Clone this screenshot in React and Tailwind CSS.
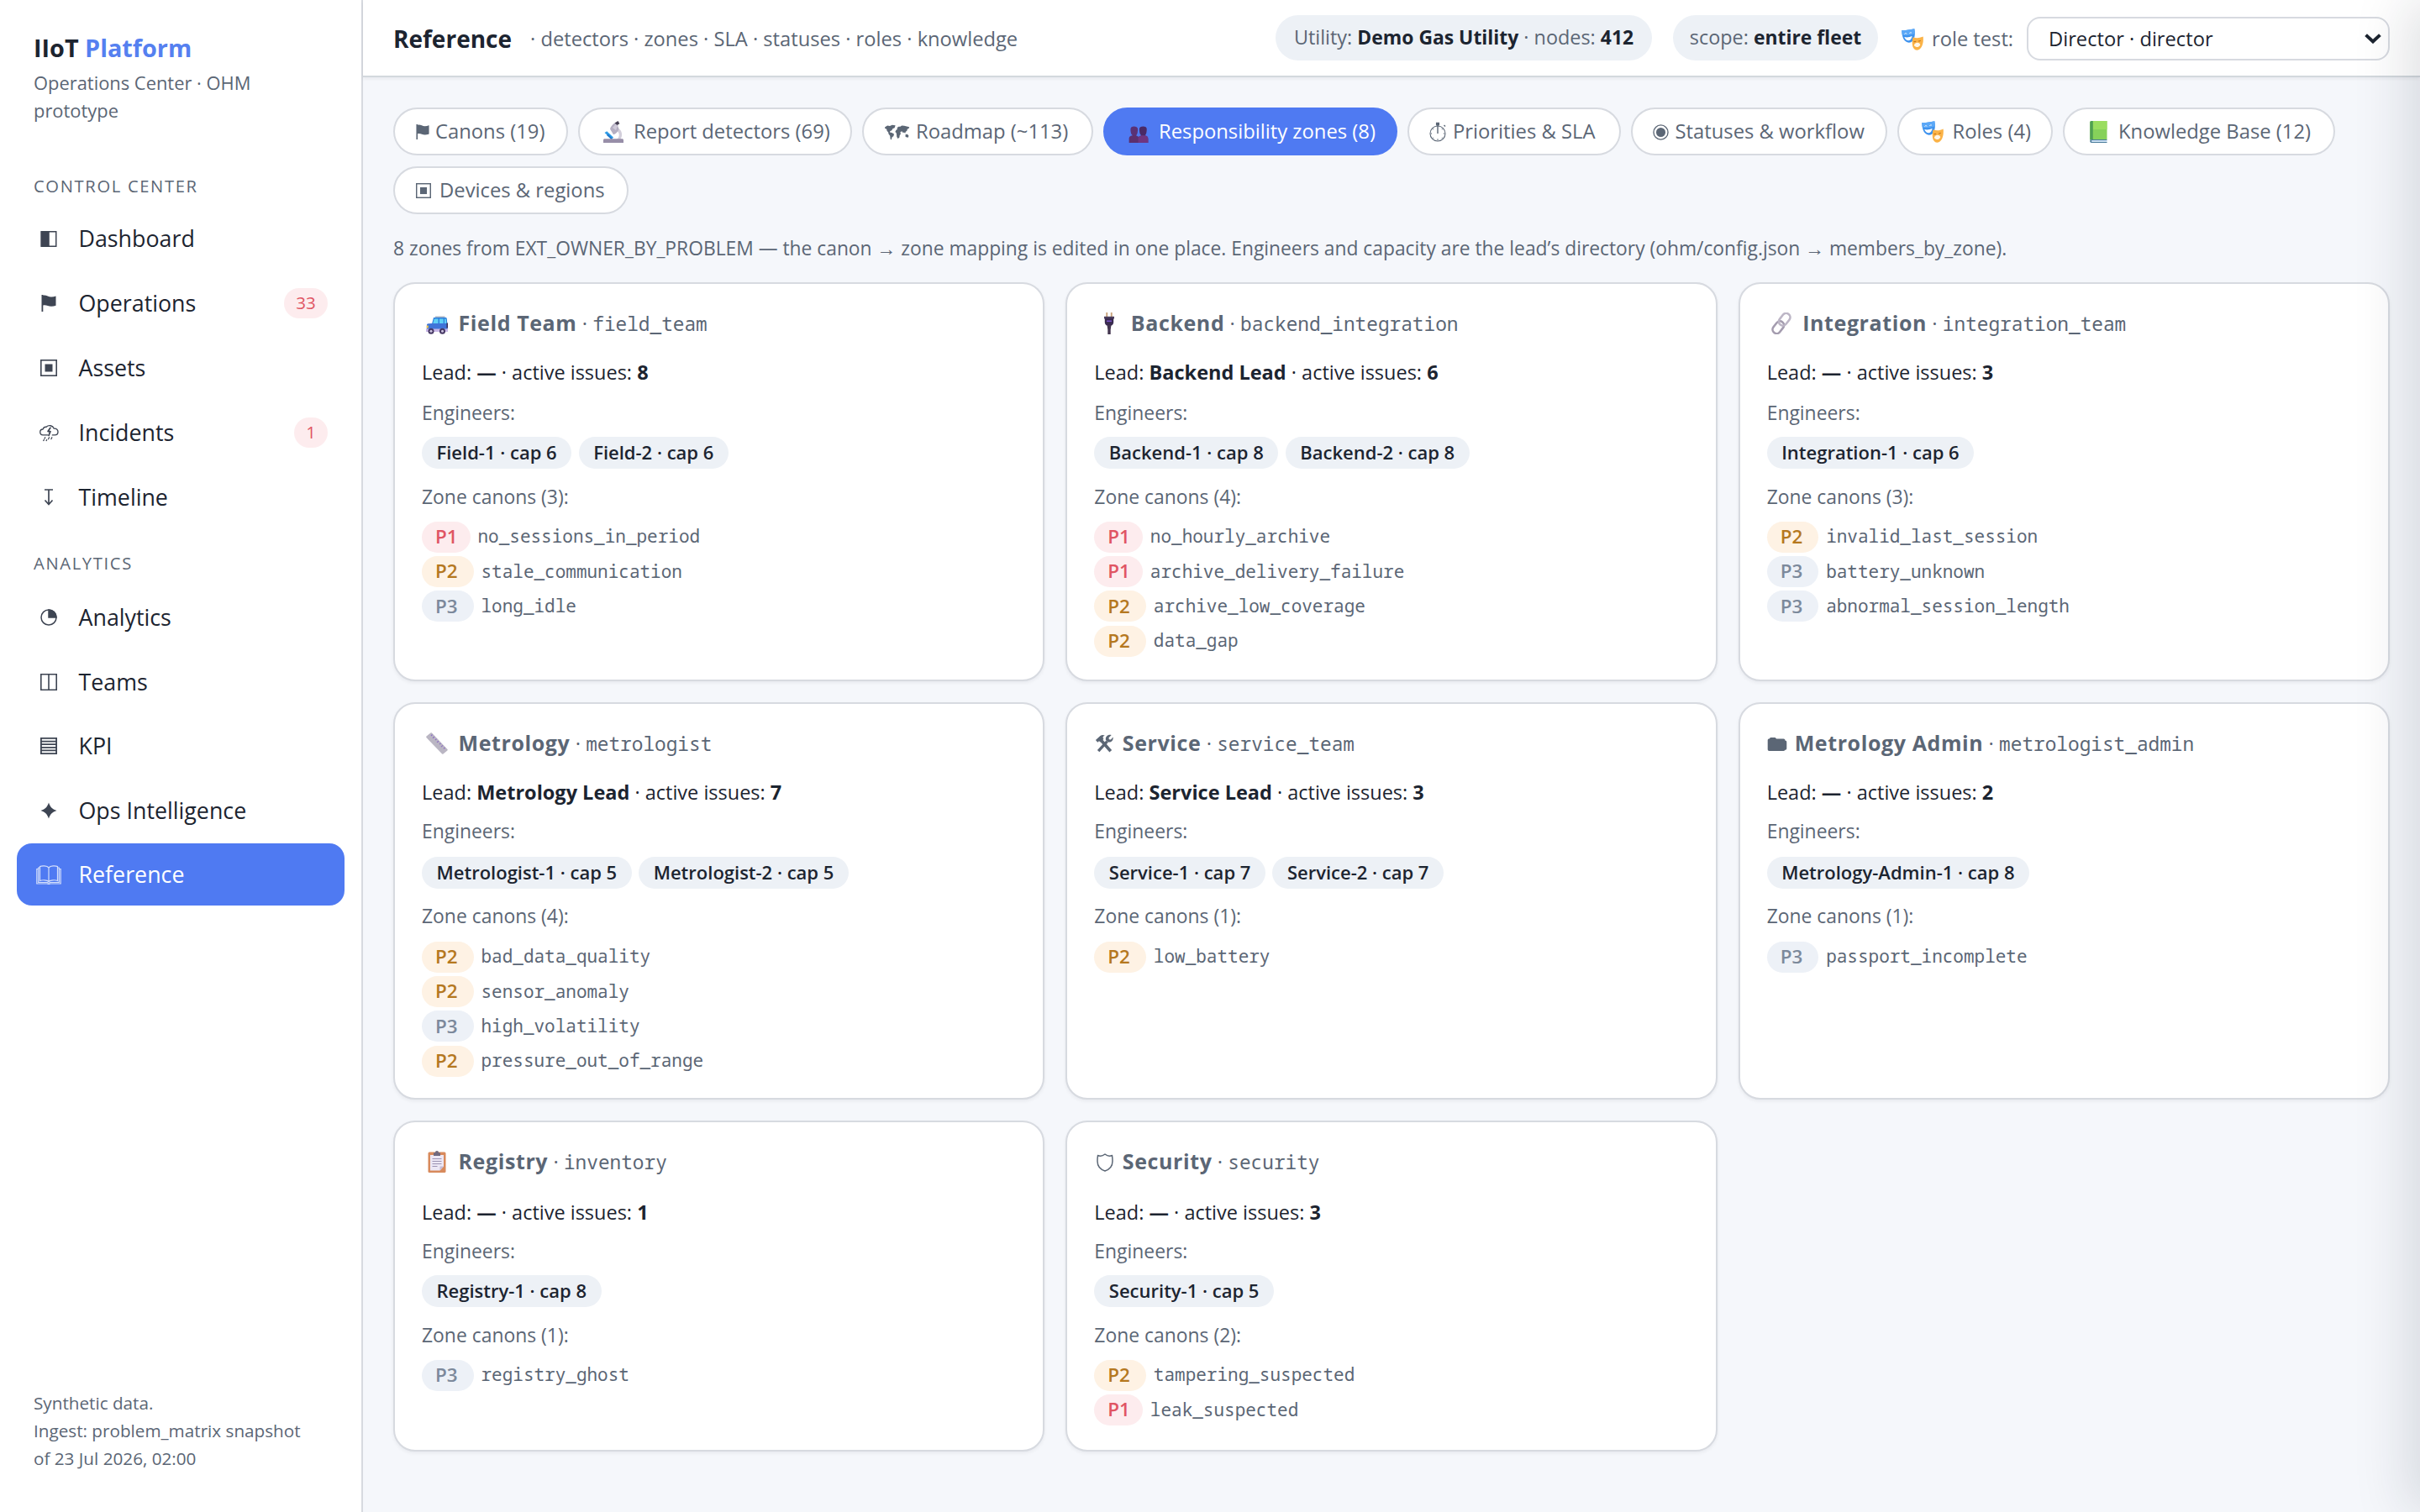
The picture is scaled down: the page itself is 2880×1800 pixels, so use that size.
import React from "react";

/* ---------- monochrome symbols (drawn in currentColor) ---------- */

const HalfSquare = ({ className }) => (
  <svg viewBox="0 0 20 20" className={className} fill="none" stroke="currentColor" strokeWidth="1.6">
    <rect x="0.8" y="0.8" width="18.4" height="18.4" />
    <path d="M1 1h9v18H1z" fill="currentColor" />
  </svg>
);
const Flag = ({ className }) => (
  <svg viewBox="0 0 18 20" className={className} fill="currentColor">
    <path d="M0.5 0h1.8v20H0.5zM2.3 0.6C6 -0.2 8.4 2.4 12 2.4c2 0 3.8-.5 5.5-1v11.4c-1.700.6-3.500 1-5.500 1-3.600 0-6-2.200-9.700-1.400z" />
  </svg>
);
const TargetSquare = ({ className }) => (
  <svg viewBox="0 0 20 20" className={className} fill="none" stroke="currentColor" strokeWidth="1.6">
    <rect x="0.8" y="0.8" width="18.4" height="18.4" />
    <path d="M5.500 5.500h9v9h-9z" fill="currentColor" stroke="none" />
  </svg>
);
const Storm = ({ className }) => (
  <svg viewBox="0 0 24 22" className={className} fill="none" stroke="currentColor" strokeWidth="1.400" strokeLinejoin="round" strokeLinecap="round">
    <path d="M10 13.500H4.500a3.600 3.600 0 0 1-.3-7.200A4 4 0 0 1 8.500 3.400 5.800 5.800 0 0 1 18 5.400c3.400-.3 5 1.800 5 4 0 2.400-1.600 4.100-4 4.100h-3" />
    <path d="M13.500 4.500 10.500 9h3l-2 5" strokeWidth="1.800" />
    <path d="M7 16.500l-.8 1.500M5.500 19.500l-.6 1M12 16.500l-1 2M9 19.500l-.6 1M15.500 16.500l-1 2" strokeWidth="1.300" />
  </svg>
);
const DownFromBar = ({ className }) => (
  <svg viewBox="0 0 12 20" className={className} fill="none" stroke="currentColor" strokeWidth="1.700">
    <path d="M1 1h10M6 1v17M1.500 13.500 6 18.500l4.500-5" />
  </svg>
);
const QuarterPie = ({ className }) => (
  <svg viewBox="0 0 20 20" className={className} fill="none" stroke="currentColor" strokeWidth="1.500">
    <circle cx="10" cy="10" r="9" />
    <path d="M10 1a9 9 0 0 1 9 9h-9z" fill="currentColor" />
  </svg>
);
const SplitSquare = ({ className }) => (
  <svg viewBox="0 0 20 20" className={className} fill="none" stroke="currentColor" strokeWidth="1.600">
    <path d="M.8.8h18.400v18.400H.8zM10 .8v18.400" />
  </svg>
);
const LinedSquare = ({ className }) => (
  <svg viewBox="0 0 20 20" className={className} fill="none" stroke="currentColor" strokeWidth="1.800">
    <path d="M.9.9h18.200v18.200H.9zM1 4.600h18M1 8.200h18M1 11.800h18M1 15.400h18" />
  </svg>
);
const Spark = ({ className }) => (
  <svg viewBox="0 0 20 20" className={className} fill="currentColor">
    <path d="M10 .5c1.600 5 4 7.600 9.500 9.500-5.500 1.900-7.900 4.500-9.500 9.500C8.400 14.500 6 11.900.5 10 6 8.100 8.400 5.500 10 .5z" />
  </svg>
);
const OpenBook = ({ className }) => (
  <svg viewBox="0 0 30 23" className={className} fill="none" stroke="currentColor" strokeWidth="1.200">
    <path d="M15 3C13 .6 7 .4 4.500 1.600V18.500C7.500 17.300 13 17.500 15 19.500 17 17.500 22.500 17.300 25.500 18.500V1.600C23 .4 17 .6 15 3zM15 3v16.500" />
    <path d="M4.500 3H2.700v17.500h10.600c1 .8 2.400.8 3.400 0h10.600V3h-1.800" />
    <path d="M2.700 4.500H.8V22h12.500c1 .6 2.400.6 3.400 0h12.500V4.500h-1.900" />
  </svg>
);
const WorldMap = ({ className }) => (
  <svg viewBox="0 0 32 20" className={className} fill="currentColor">
    <path d="M1 3.500 4 1.500 7 2l3-1.200 4 .4-1 3.300-2.500 1-1 2-2 1-.5 1.500 2.500.5 2.800 1.700-.6 2.600-2 1.600L9 19.500l-1.300-1-.4-4L5.500 12 5 9.800 3.500 8.500 3 6 .8 5z" />
    <path d="M15 7l1.500-1-.5-1.500 2-1.700L20 3l2-1.500 3 .3L31.500 3.500l-1 2-1.500.2-.4 2.300-1.800 1.400-.6 2-1.300-1.500-1.300 1-1-2-2 .2-.6 1.600 1 1-1.600 2-.4 3-2 1.300-1.300-2.500-.2-3L15 10.500l-1.300-1zM26.500 13l2.500-.6 1.700 2-.8 2.200-3.200-.8z" />
  </svg>
);
const Stopwatch = ({ className }) => (
  <svg viewBox="0 0 20 24" className={className} fill="none" stroke="currentColor" strokeWidth="1.100">
    <circle cx="10" cy="14" r="9" />
    <path d="M8 1.500h4M8.500 3h3M10 1.500V14M17.500 4l1.500 1.500M10 20.500v1.200M3 14H2.300M17.700 14h-.8M5 9l-.5-.5M15 9l.5-.5M5 19l-.5.5M15 19l.5.5" strokeWidth="1.400" />
    <path d="M8.500 1.500h3v2.500h-3z" fill="currentColor" />
  </svg>
);
const Fisheye = ({ className }) => (
  <svg viewBox="0 0 20 20" className={className} fill="none" stroke="currentColor" strokeWidth="1.400">
    <circle cx="10" cy="10" r="9" />
    <circle cx="10" cy="10" r="5.800" fill="currentColor" stroke="none" />
  </svg>
);
const Tools = ({ className }) => (
  <svg viewBox="0 0 24 24" className={className} fill="none" stroke="currentColor">
    <path d="M8.500 8.500 20.500 22" strokeWidth="4" />
    <path d="M1 7.500 7 2.200c2-1.400 4-1.400 6-.4-1.800.4-2.700 1.400-2.600 2.700l1 1.800-4 4-2-1.200-1.800 1.400z" fill="currentColor" stroke="none" />
    <path d="M16 9.500 4.500 22" strokeWidth="3.600" />
    <path d="M21.500 1.200 18 4.500l.4 2.300 2.300.3 2.800-3.300c.9 4.400-2.800 7.700-6.700 6.300l-2.600-2.400C13 3.500 17 -.3 21.500 1.200z" fill="currentColor" stroke="none" />
  </svg>
);
const Folder = ({ className }) => (
  <svg viewBox="0 0 24 17" className={className} fill="currentColor">
    <path d="M0 3.500C0 2 .8 1.500 2 1.500L3.500 0h6L11 1.700h9c1.400 0 2 .8 2 2 1.400.1 2 .9 2 2.300v7.600c0 1.500-.8 2.200-2 2.200-.2.800-.8 1.200-2 1.200H2c-1.300 0-2-.7-2-2z" />
  </svg>
);
const Shield = ({ className }) => (
  <svg viewBox="0 0 22 22" className={className} fill="none" stroke="currentColor" strokeWidth="1.500" strokeLinejoin="round">
    <path d="M2.500 2.500c3 1.300 5.500.9 8.500-1.500 3 2.400 5.500 2.800 8.500 1.500.3 2 .5 4.300.5 6.800 0 5.700-3.500 9.900-9 11.700C5.500 19.200 2 15 2 9.300c0-2.500.2-4.800.5-6.800z" />
  </svg>
);
const Chevron = ({ className }) => (
  <svg viewBox="0 0 20 12" className={className} fill="none" stroke="currentColor" strokeWidth="4">
    <path d="M1.600 1.600 10 9.400l8.400-7.800" />
  </svg>
);

/* ---------- colour symbols ---------- */

const Microscope = ({ className }) => (
  <svg viewBox="0 0 26 26" className={className}>
    <path d="M14.500 2.500 18.500 0l1.800 3.200-4 2.600z" fill="#453f52" />
    <path d="M18.500 8.500c4.800 2.500 6.500 9.500 2 14.500h-5c5-3 5.800-8 1.500-11.500z" fill="#d3cfdb" />
    <path d="M9 9.500c1-3 3-5.500 5.500-7L18 5.200l1.500 4.300c-.8 3-3 5.700-6.500 6.800z" fill="#b5afc2" />
    <path d="M12 8l3.500-4 2.500 2-2 5z" fill="#d0cbda" />
    <path d="M2.500 14 5.200 12.200 13 19.500 11 22z" fill="#2f9be6" />
    <path d="M5 17l1.500-1.500 5 5-1 1.500z" fill="#1f78cc" />
    <path d="M1 22.800c0-1 .7-1.600 1.700-1.600h20.600c1 0 1.700.6 1.700 1.600V26H1z" fill="#978ea8" />
  </svg>
);
const People = ({ className }) => (
  <svg viewBox="0 0 26 22" className={className}>
    <path d="M2.500 4C2.500 1.500 4.500.5 7 .5s5 1 5 3.500-.5 7-2 8v2H5v-2C3 11 2.500 6.500 2.500 4z" fill="#5a3175" />
    <path d="M14 4c0-2.500 2-3.500 5-3.500s4.700 1 4.700 3.500-.4 7-2.200 8v2h-5v-2c-2-1-2.500-5.500-2.500-8z" fill="#4a2a66" />
    <path d="M.5 22v-5c0-3 2-4.500 6.500-4.500 3 0 5 .5 6 2 1-1.500 3-2 6-2 4.500 0 6.500 1.500 6.500 4.500v5z" fill="#5c2f6e" />
    <path d="M12.500 22v-5.500c0-2.500 2.500-4 6.500-4 4.500 0 6.500 1.500 6.500 4.500v5z" fill="#6f3580" />
  </svg>
);
const Masks = ({ className }) => (
  <svg viewBox="0 0 26 26" className={className}>
    <path d="M.3 2C4.500 2.200 9 1.700 15.300.3c.9 5 .8 9.200-.8 12.400-1.200 2.500-3.300 3.900-5.800 4C3 16.300.2 10 .3 2z" fill="#3d92ee" />
    <path d="M.3 2C4.500 2.200 9 1.700 15.300.3c.4 2.300.6 4.300.5 6C10 8.500 4 8.500.8 7.500.4 5.600.3 3.800.3 2z" fill="#5ba8f7" />
    <path d="M3.200 10c3 .9 6.500.4 9.300-1.200-.2 3-1.700 5.200-4 5.400-2.500.1-4.300-1.400-5.300-4.200z" fill="#fff" />
    <path d="M3.500 6.500c.8-1 1.900-1 2.800-.2M9.300 5.800c.7-1 1.900-1.200 2.700-.6" stroke="#fff" strokeWidth="1" fill="none" />
    <path d="M13.500 10.300c4 1.500 8 1.200 12.200-.8.5 6-.3 10-2.500 13.200-1.800 2.600-4.700 3.600-7 2.500-3.700-1.900-4.200-8.300-2.700-14.900z" fill="#fbb347" />
    <path d="M14.800 20c1.500-4 6-4.200 7.500-.8-1.300 2.800-4.500 4.400-7.500.8z" fill="#fff6e8" />
    <path d="M14.600 15.200c.8.6 1.800.6 2.600-.1M20 14.800c.9.4 2 .1 2.600-.7" stroke="#c6761b" strokeWidth="1.100" fill="none" />
  </svg>
);
const GreenBook = ({ className }) => (
  <svg viewBox="0 0 21 26" className={className}>
    <path d="M2 0h18.500v22H2C.8 22 .3 22.500.3 23.500V1.800C.3.7.9 0 2 0z" fill="#86d15a" />
    <path d="M3.500 0h17v10H3.500z" fill="#9add5f" />
    <path d="M2 0h1.800v22H2C.8 22 .3 22.500.3 23.500V1.800C.3.700.9 0 2 0z" fill="#4f9f52" />
    <path d="M2 22h18.500v1H2.500v2h18v1H2c-1.100 0-1.700-.8-1.700-2s.6-2 1.700-2z" fill="#4a7c9b" />
    <path d="M2.500 23h18v2h-18z" fill="#c9dff0" />
  </svg>
);
const Jeep = ({ className }) => (
  <svg viewBox="0 0 26 22" className={className}>
    <path d="M11 .5h11.500v2H11z" fill="#a9b4c4" />
    <path d="M9 2h14.500c.8 0 1.200.6 1.300 1.500L25.500 11v5H5V9.500h2z" fill="#2f7fdc" />
    <path d="M9.800 3.500h4.700V9H8.300zM16 3.500h4.700V9H16zM22 3.500h1.600l.8 5.500H22z" fill="#5fd0f5" />
    <path d="M1 11c0-1 .6-1.600 1.600-1.700L8 9h15l2.500 1.500V17H.8z" fill="#3f74d8" />
    <path d="M.6 11.500h2.200v3H.6z" fill="#f3c64c" />
    <path d="M0 15.500h26V19H0z" fill="#c7b6e6" />
    <path d="M24.500 8.500H26v6h-1.500z" fill="#3a2f55" />
    <circle cx="6" cy="18.300" r="3.500" fill="#453763" />
    <circle cx="6" cy="18.300" r="1.500" fill="#cfc6e2" />
    <circle cx="19.500" cy="18.300" r="3.500" fill="#453763" />
    <circle cx="19.500" cy="18.300" r="1.500" fill="#cfc6e2" />
  </svg>
);
const Plug = ({ className }) => (
  <svg viewBox="0 0 26 26" className={className}>
    <path d="M9.300 0h1.900v6H9.300zM14.800 0h1.900v6h-1.900z" fill="#c9a37c" />
    <path d="M7 4.800h12v2.700H7z" fill="#4a3d5c" />
    <path d="M7.800 7h10.400v4.500c0 2-.9 3.300-2.200 4H10c-1.300-.7-2.200-2-2.200-4z" fill="#3a2b50" />
    <path d="M10 9.500h6v1.600h-6z" fill="#7c55c8" />
    <path d="M10.500 15h5l-.8 5.500V26h-3.400v-5.500z" fill="#43364f" />
  </svg>
);
const Link = ({ className }) => (
  <svg viewBox="0 0 26 26" className={className} fill="none">
    <g transform="rotate(-52 13 13)">
      <rect x="-1" y="8.200" width="16" height="9.600" rx="4.800" stroke="#a49caf" strokeWidth="2.600" />
      <rect x="11" y="8.200" width="16" height="9.600" rx="4.800" stroke="#bdb6c6" strokeWidth="2.600" />
    </g>
  </svg>
);
const Ruler = ({ className }) => (
  <svg viewBox="0 0 26 26" className={className}>
    <path d="M.5 4.500 5.500.4c.5-.4 1-.3 1.400.1L25.500 20c.4.400.3 1-.1 1.400L20.500 25.600c-.5.4-1 .3-1.400-.1L.4 6c-.4-.5-.3-1.100.1-1.500z" fill="#bab6c3" />
    <path d="M7.500 2.500 6 4M10 5 8 6.700M12.500 7.600 11 9M15 10.200l-2 1.700M17.500 12.800 16 14.100M20 15.400l-2 1.700M22.500 18 21 19.300" stroke="#8f70c4" strokeWidth="1.200" />
  </svg>
);
const Clipboard = ({ className }) => (
  <svg viewBox="0 0 22 26" className={className}>
    <rect x="0.500" y="1.500" width="21" height="24.500" rx="1.500" fill="#d88a5c" />
    <path d="M3 5h16v13.500L14.500 23.500H3z" fill="#ece7f5" />
    <path d="M19 18.500h-4.500v5z" fill="#c5bcd6" />
    <path d="M7 2.200h2C9 .8 9.700 0 11 0s2 .8 2 2.200h2V6H7z" fill="#71697e" />
    <path d="M5.500 9.500h11M5.500 12.500h11M5.500 15.500h11M5.500 18.500h6" stroke="#9c93b3" strokeWidth="1.100" />
  </svg>
);

/* ---------- data ---------- */

const controlCenter = [
  { label: "Dashboard", Icon: HalfSquare, size: "w-5 h-[19px]" },
  { label: "Operations", Icon: Flag, size: "w-[18px] h-5", badge: "33", badgeWidth: "w-[52px]" },
  { label: "Assets", Icon: TargetSquare, size: "w-5 h-5" },
  { label: "Incidents", Icon: Storm, size: "w-[23px] h-[21px]", badge: "1", badgeWidth: "w-10" },
  { label: "Timeline", Icon: DownFromBar, size: "w-3 h-5" },
];
const analytics = [
  { label: "Analytics", Icon: QuarterPie, size: "w-5 h-5" },
  { label: "Teams", Icon: SplitSquare, size: "w-5 h-5" },
  { label: "KPI", Icon: LinedSquare, size: "w-5 h-5" },
  { label: "Ops Intelligence", Icon: Spark, size: "w-5 h-5" },
  { label: "Reference", Icon: OpenBook, size: "w-[30px] h-[23px]", active: true },
];

const tabs = [
  { label: "Canons (19)", Icon: Flag, size: "w-4 h-[18px]", slot: "w-6 pl-px", width: "w-[208px]" },
  { label: "Report detectors (69)", Icon: Microscope, size: "w-[26px] h-[26px]", slot: "w-10 pl-[3px]", width: "w-[325.500px]" },
  { label: "Roadmap (~113)", Icon: WorldMap, size: "w-[31px] h-[19px]", slot: "w-[38.500px]", width: "w-[275.500px]" },
  { label: "Responsibility zones (8)", Icon: People, size: "w-[26px] h-5", slot: "w-10 pl-[3px] pt-1.5", width: "w-[350px]", active: true },
  { label: "Priorities & SLA", Icon: Stopwatch, size: "w-5 h-6", slot: "w-7", width: "w-[253.500px]" },
  { label: "Statuses & workflow", Icon: Fisheye, size: "w-[19px] h-[19px]", slot: "w-[27px]", width: "w-[305px]" },
  { label: "Roles (4)", Icon: Masks, size: "w-[26px] h-[26px]", slot: "w-10 pl-[3px]", width: "w-[185.500px]" },
  { label: "Knowledge Base (12)", Icon: GreenBook, size: "w-[21px] h-[26px]", slot: "w-10 pl-1.5", width: "w-[323.500px]" },
  { label: "Devices & regions", Icon: TargetSquare, size: "w-[18px] h-[18px]", slot: "w-[29px] pl-px", width: "w-[280px]" },
];

const emojiSlot = "w-[43.500px] pl-[5px]";
const zones = [
  {
    name: "Field Team", id: "field_team", Icon: Jeep, size: "w-[26px] h-[22px] mt-1", slot: emojiSlot, issues: 8,
    engineers: ["Field-1 · cap 6", "Field-2 · cap 6"],
    canons: [["P1", "no_sessions_in_period"], ["P2", "stale_communication"], ["P3", "long_idle"]],
  },
  {
    name: "Backend", id: "backend_integration", Icon: Plug, size: "w-[26px] h-[26px]", slot: emojiSlot, lead: "Backend Lead", issues: 6,
    engineers: ["Backend-1 · cap 8", "Backend-2 · cap 8"],
    canons: [["P1", "no_hourly_archive"], ["P1", "archive_delivery_failure"], ["P2", "archive_low_coverage"], ["P2", "data_gap"]],
  },
  {
    name: "Integration", id: "integration_team", Icon: Link, size: "w-[26px] h-[26px]", slot: "w-[42.500px] pl-[4px]", issues: 3,
    engineers: ["Integration-1 · cap 6"],
    canons: [["P2", "invalid_last_session"], ["P3", "battery_unknown"], ["P3", "abnormal_session_length"]],
  },
  {
    name: "Metrology", id: "metrologist", Icon: Ruler, size: "w-[26px] h-[26px]", slot: emojiSlot, lead: "Metrology Lead", issues: 7,
    engineers: ["Metrologist-1 · cap 5", "Metrologist-2 · cap 5"],
    canons: [["P2", "bad_data_quality"], ["P2", "sensor_anomaly"], ["P3", "high_volatility"], ["P2", "pressure_out_of_range"]],
  },
  {
    name: "Service", id: "service_team", Icon: Tools, size: "w-6 h-[22px]", slot: "w-[33.500px]", lead: "Service Lead", issues: 3,
    engineers: ["Service-1 · cap 7", "Service-2 · cap 7"],
    canons: [["P2", "low_battery"]],
  },
  {
    name: "Metrology Admin", id: "metrologist_admin", Icon: Folder, size: "w-6 h-4 mt-0.5", slot: "w-[33px]", issues: 2,
    engineers: ["Metrology-Admin-1 · cap 8"],
    canons: [["P3", "passport_incomplete"]],
  },
  {
    name: "Registry", id: "inventory", Icon: Clipboard, size: "w-[22px] h-[26px]", slot: "w-[43.500px] pl-[7px]", issues: 1,
    engineers: ["Registry-1 · cap 8"],
    canons: [["P3", "registry_ghost"]],
  },
  {
    name: "Security", id: "security", Icon: Shield, size: "w-[22px] h-[22px] mt-0.5", slot: "w-[33.500px] pl-0.5", issues: 3,
    engineers: ["Security-1 · cap 5"],
    canons: [["P2", "tampering_suspected"], ["P1", "leak_suspected"]],
  },
];

/* Vertical rhythm of the lead and label lines for each grid row. */
const rowSpacing = [
  { lead: "mt-6", label: "mt-[17px]", chips: "mt-3", canons: "mt-[18px]", list: "mt-[11px]" },
  { lead: "mt-6", label: "mt-[15px]", chips: "mt-3.5", canons: "mt-[17px]", list: "mt-3" },
  { lead: "mt-[26px]", label: "mt-[15px]", chips: "mt-3", canons: "mt-[18px]", list: "mt-[11px]" },
];

const priorityStyle = {
  P1: "w-[57.500px] bg-[#fdecee] text-[#e05563]",
  P2: "w-[61.500px] bg-[#fef2e4] text-[#b5781f]",
  P3: "w-[61.500px] bg-[#edf1f7] text-[#7c899b]",
};

/* ---------- pieces ---------- */

function NavItem({ label, Icon, size, badge, badgeWidth, active }) {
  return (
    <a className={`flex h-[74px] items-center rounded-[18px] pr-5 ${active ? "bg-[#4f7af2] text-white" : "text-[#1c2430]"}`}>
      <span className={`flex w-[76px] shrink-0 items-center justify-center ${active ? "text-[#d3defb]" : "text-[#3e4553]"}`}>
        <Icon className={size} />
      </span>
      <span className="-ml-[2.500px] flex-1 pt-px text-[26.800px]">{label}</span>
      {badge && (
        <span className={`flex h-9 items-center justify-center rounded-full bg-[#fdecee] pb-px text-[20.500px] text-[#e05563] ${badgeWidth}`}>{badge}</span>
      )}
    </a>
  );
}

function Sidebar() {
  return (
    <aside className="flex h-full w-[432px] shrink-0 flex-col border-r-2 border-[#d7dae0] bg-white">
      <div className="px-10 pt-[37px]">
        <div className="text-[28.800px] font-bold leading-[40px] text-[#1c2430]">
          IIoT <span className="text-[#5580f0]">Platform</span>
        </div>
        <div className="mt-[6px] text-[21.900px] leading-[32.500px] text-[#5b6675]">
          Operations Center · OHM
          <br />
          prototype
        </div>
      </div>
      <div className="mt-[57px] px-10 text-[20.200px] leading-[32px] tracking-[1.650px] text-[#5b6675]">CONTROL CENTER</div>
      <nav className="mt-2.5 flex flex-col gap-[3px] px-5">
        {controlCenter.map((item) => <NavItem key={item.label} {...item} />)}
      </nav>
      <div className="mt-[25px] px-10 text-[20.200px] leading-[32px] tracking-[1.650px] text-[#5b6675]">ANALYTICS</div>
      <nav className="mt-3 flex flex-col gap-[2.500px] px-5">
        {analytics.map((item) => <NavItem key={item.label} {...item} />)}
      </nav>
      <div className="mt-auto px-10 pb-[47px] text-[20.700px] leading-[33px] text-[#5b6675]">
        Synthetic data.
        <br />
        Ingest: problem_matrix snapshot
        <br />
        of 23 Jul 2026, 02:00
      </div>
    </aside>
  );
}

function Header() {
  return (
    <header className="flex h-[92px] shrink-0 items-center border-b-2 border-[#d3d8dd] bg-white pl-9 pr-9 shadow-[0_2px_4px_rgba(16,24,40,0.06)]">
      <h1 className="mt-0.5 text-[28px] font-bold text-[#1c2430]">Reference</h1>
      <span className="ml-[22px] mt-1 text-[23.700px]  text-[#5b6675]">· detectors · zones · SLA · statuses · roles · knowledge</span>
      <div className="ml-auto flex items-center text-[#5b6675]">
        <span className="flex h-[54px] w-[448px] items-center justify-center whitespace-pre rounded-full bg-[#edf1f6] text-[23.400px]">
          Utility: <b className="text-[22.900px] text-[#1c2430]">Demo Gas Utility</b> · nodes: <b className="text-[22.900px] text-[#1c2430]">412</b>
        </span>
        <span className="ml-[25px] flex h-[54px] w-[244px] items-center justify-center whitespace-pre rounded-full bg-[#edf1f6] text-[23.400px]">
          scope: <b className="text-[22.900px] text-[#1c2430]">entire fleet</b>
        </span>
        <Masks className="ml-[28px] mt-1 h-[26px] w-[26px]" />
        <span className="ml-2.5 mt-1 w-[113px] text-[23.700px]">role test:</span>
        <div className="mt-0.5 flex h-[52px] w-[432px] items-center justify-between rounded-2xl border-2 border-[#d7dae0] bg-white pl-6 pr-2 text-[23.700px] text-[#1c2430]">
          <span className="pt-0.5">Director · director</span>
          <Chevron className="h-3 w-5" />
        </div>
      </div>
    </header>
  );
}

function Tab({ label, Icon, size, slot, width, active }) {
  return (
    <button
      className={`flex h-[57px] shrink-0 items-center whitespace-nowrap rounded-full border-2 pl-6 pt-px text-[23.800px] ${width} ${
        active ? "border-[#4f7af2] bg-[#4f7af2] text-white" : "border-[#d7dae0] bg-white text-[#5b6675]"
      }`}
    >
      <span className={`flex shrink-0 items-center ${slot}`}>
        <Icon className={size} />
      </span>
      {label}
    </button>
  );
}

function ZoneCard({ zone, spacing }) {
  const { name, id, Icon, size, slot, lead, issues, engineers, canons } = zone;
  return (
    <section className="rounded-[26px] border-2 border-[#d7dae0] bg-white pl-8 pt-[29px] shadow-[0_2px_4px_rgba(16,24,40,0.06)]">
      <h2 className="flex h-9 items-center whitespace-pre text-[24px] text-[#5b6675]">
        <span className={`flex shrink-0 items-center ${slot}`}>
          <Icon className={size} />
        </span>
        <b className="text-[25px] tracking-[0.600px]">{name}</b>
        {" · "}
        <span className="mt-0.5 font-['Noto_Sans_Mono','DejaVu_Sans_Mono',monospace] text-[22.750px]">{id}</span>
      </h2>
      <p className={`h-8 whitespace-pre text-[23.500px] leading-8 text-[#1c2430] ${spacing.lead}`}>
        Lead: <b>{lead || "—"}</b> · active issues: <b>{issues}</b>
      </p>
      <p className={`h-8 text-[22.900px] leading-8 text-[#5b6675] ${spacing.label}`}>Engineers:</p>
      <div className={`flex gap-[8.500px] ${spacing.chips}`}>
        {engineers.map((e) => (
          <span key={e} className="flex h-[37.500px] items-center rounded-full bg-[#edf1f6] px-[17.500px] pb-px text-[22px] font-semibold text-[#1c2430]">{e}</span>
        ))}
      </div>
      <p className={`h-8 text-[22.900px] leading-8 text-[#5b6675] ${spacing.canons}`}>Zone canons ({canons.length}):</p>
      <ul className={spacing.list}>
        {canons.map(([priority, canon]) => (
          <li key={canon} className="flex h-[41.330px] items-center">
            <span className={`flex h-[37px] shrink-0 items-center rounded-full pb-px pl-4 text-[22.400px] font-semibold ${priorityStyle[priority]}`}>{priority}</span>
            <span className="ml-[9px] font-['Noto_Sans_Mono','DejaVu_Sans_Mono',monospace] text-[21px] text-[#5b6675]">{canon}</span>
          </li>
        ))}
      </ul>
    </section>
  );
}

export default function App() {
  return (
    <div className="relative flex h-[1800px] w-[2880px] overflow-hidden bg-[#f5f7fb] font-['Open_Sans','Noto_Sans',sans-serif]">
      <Sidebar />
      <div className="flex min-w-0 flex-1 flex-col">
        <Header />
        <main className="flex flex-col px-9 pt-9">
          <div className="flex flex-wrap gap-x-3 gap-y-[13px]">
            {tabs.map((tab) => <Tab key={tab.label} {...tab} />)}
          </div>
          <p className="mt-[25px] h-8 whitespace-nowrap text-[22.820px] leading-8 text-[#5b6675]">
            8 zones from EXT_OWNER_BY_PROBLEM — the canon → zone mapping is edited in one place. Engineers and capacity are the lead’s directory (ohm/config.json → members_by_zone).
          </p>
          <div className="mt-6 grid grid-cols-3 grid-rows-[475px_473px_394px] gap-[25px]">
            {zones.map((zone, i) => <ZoneCard key={zone.id} zone={zone} spacing={rowSpacing[Math.floor(i / 3)]} />)}
          </div>
        </main>
      </div>
      {/* Closed drawer parked past the right edge; only its shadow reaches the page. */}
      <div className="pointer-events-none absolute left-full top-0 h-full w-[800px] shadow-[-16px_0_60px_rgba(20,30,50,0.13)]" />
    </div>
  );
}
